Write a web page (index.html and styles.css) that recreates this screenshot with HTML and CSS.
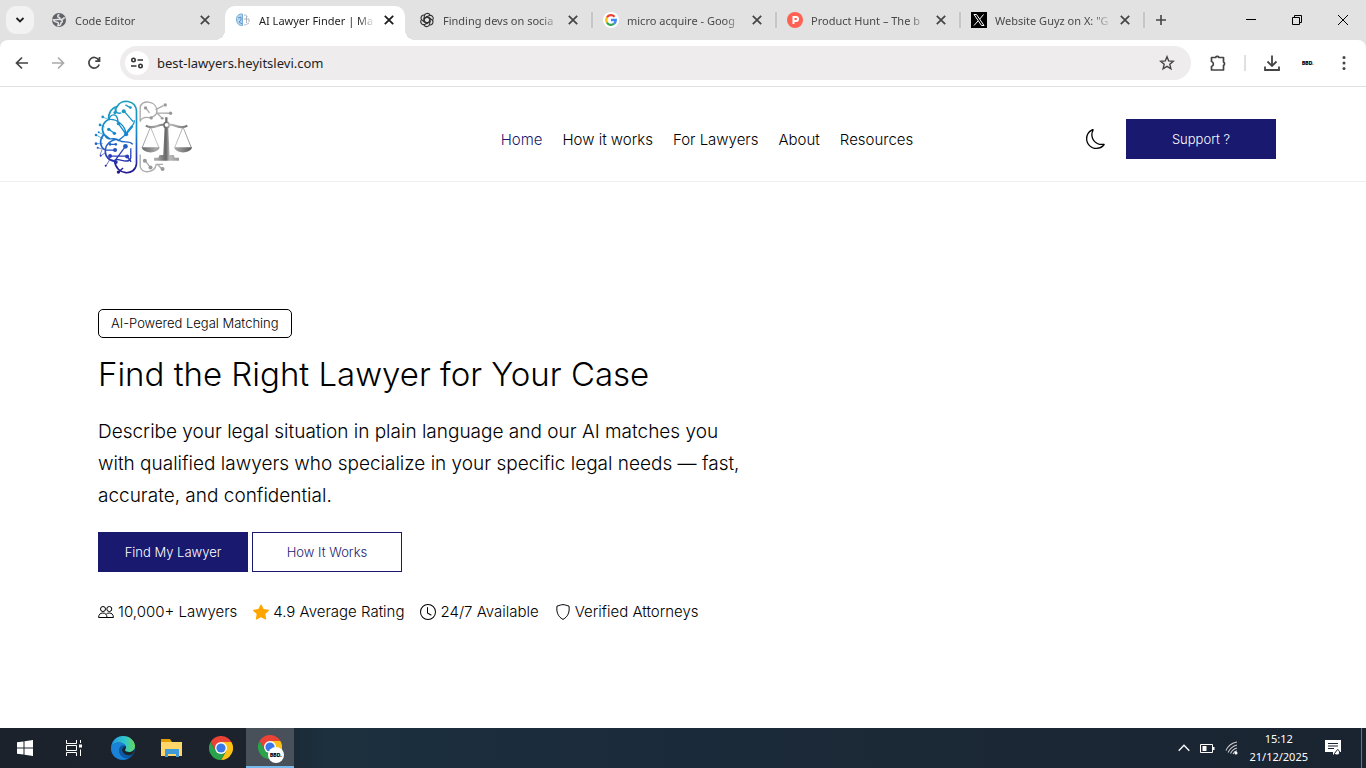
FILE: index.html
```
<!DOCTYPE html>
<html lang="en">
<head>
    <meta charset="UTF-8">
    <meta name="viewport" content="width=device-width, initial-scale=1.0">
    <title>AI Lawyer Finder</title>
    <link rel="stylesheet" href="styles.css">
</head>
<body>
    <!-- Shared symbols -->
    <svg class="defs" aria-hidden="true">
        <symbol id="close" viewBox="0 0 10 10"><path d="M1.5 1.5l7 7M8.5 1.5l-7 7" fill="none" stroke="currentColor" stroke-width="1.5"/></symbol>
        <symbol id="chrome" viewBox="0 0 24 24">
            <path d="M12 6h10.4A12 12 0 0 0 1.6 6l5.2 9z" fill="#ea4335"/>
            <path d="M17.2 15L12 24A12 12 0 0 0 22.4 6H12z" fill="#fbc116"/>
            <path d="M6.8 15L1.6 6A12 12 0 0 0 12 24l5.2-9z" fill="#2ba24c"/>
            <circle cx="12" cy="12" r="6" fill="#fff"/>
            <circle cx="12" cy="12" r="4.6" fill="#3b78e7"/>
        </symbol>
    </svg>

    <div class="tab-strip">
        <button class="tab-search" aria-label="Search tabs"><svg viewBox="0 0 10 10" width="10" height="10"><path d="M1.5 3L5 6.5 8.5 3" fill="none" stroke="#222" stroke-width="1.8"/></svg></button>
        <div class="tabs">
            <div class="tab no-line">
                <svg class="favicon" viewBox="0 0 16 16"><circle cx="8" cy="8" r="7" fill="#5f6368"/><path d="M8.5 2.5C6.500 3 6 5 8 5.500s.5 2-1.500 2L2.300 8c.7 1.500 2 2.300 4 2.200 1.500 0 1.200 1.800.7 3.300 2.500.3 3-1.500 3-2.700 2-.3 1.500-2.500 0-3 1.500-.8 3-.8 3.500-2.500" fill="none" stroke="#e2e2e2" stroke-width="1.6"/></svg>
                <span class="tab-title">Code Editor</span>
                <button class="tab-close" aria-label="Close"><svg><use href="#close"/></svg></button>
            </div>
            <div class="tab active no-line">
                <svg class="favicon" viewBox="0 0 16 16"><path d="M7.500 2C4 1.500 1 4 1.500 8s3 6 6 5.500z" fill="#b5d7ee" stroke="#79add4"/><path d="M3 6l3-1v3L4 10l3 2" fill="none" stroke="#5a8fd0"/><path d="M9 3c3 0 3 1 3 2M9 7h5M11.500 4v7M9 13c2 0 3-1 5-2M14 7v3" fill="none" stroke="#aeb4bb"/></svg>
                <span class="tab-title">AI Lawyer Finder | Ma</span>
                <button class="tab-close" aria-label="Close"><svg><use href="#close"/></svg></button>
            </div>
            <div class="tab">
                <svg class="favicon" viewBox="0 0 16 16"><g fill="none" stroke="#333" stroke-width="1.1"><path id="petal" d="M5.300 9.500V4.300a3 3 0 0 1 5.700-1.200M5.300 6.300L8 4.700l3.700 2.100"/><use href="#petal" transform="rotate(60 8 8)"/><use href="#petal" transform="rotate(120 8 8)"/><use href="#petal" transform="rotate(180 8 8)"/><use href="#petal" transform="rotate(240 8 8)"/><use href="#petal" transform="rotate(300 8 8)"/></g></svg>
                <span class="tab-title">Finding devs on socia</span>
                <button class="tab-close" aria-label="Close"><svg><use href="#close"/></svg></button>
            </div>
            <div class="tab">
                <svg class="favicon" viewBox="0 0 16 16"><circle cx="8" cy="8" r="8" fill="#fff"/><g fill="none" stroke-width="2.300"><path d="M3.900 5.500A4.800 4.800 0 0 1 11.600 4.800" stroke="#ea4335"/><path d="M3.900 5.500a5 5 0 0 0 0 5" stroke="#fbbc05"/><path d="M3.900 10.500a4.800 4.800 0 0 0 7.200 1.200" stroke="#34a853"/><path d="M11.100 11.700A4.800 4.800 0 0 0 12.800 8H8" stroke="#4285f4"/></g></svg>
                <span class="tab-title">micro acquire - Goog</span>
                <button class="tab-close" aria-label="Close"><svg><use href="#close"/></svg></button>
            </div>
            <div class="tab">
                <svg class="favicon" viewBox="0 0 16 16"><circle cx="8" cy="8" r="8" fill="#ff6154"/><path d="M6.500 12V5h2.600a1.900 1.900 0 0 1 0 3.900H6.500" fill="none" stroke="#fff" stroke-width="2"/></svg>
                <span class="tab-title">Product Hunt – The b</span>
                <button class="tab-close" aria-label="Close"><svg><use href="#close"/></svg></button>
            </div>
            <div class="tab">
                <svg class="favicon" viewBox="0 0 16 16"><path d="M0 0h16v16H0z"/><path d="M3 2.500h2.500l7.500 11h-2.500zM12.500 2.500L8.800 7M7 9l-4 4.500" fill="none" stroke="#fff" stroke-width="1"/></svg>
                <span class="tab-title">Website Guyz on X: "G</span>
                <button class="tab-close" aria-label="Close"><svg><use href="#close"/></svg></button>
            </div>
        </div>
        <button class="new-tab" aria-label="New tab"><svg viewBox="0 0 12 12" width="12" height="12"><path d="M6 1v10M1 6h10" stroke="#444" stroke-width="1.6"/></svg></button>
        <div class="window-buttons">
            <button aria-label="Minimize"><svg viewBox="0 0 12 12"><path d="M1 5.500h10" stroke="#000"/></svg></button>
            <button aria-label="Restore"><svg viewBox="0 0 12 12"><path d="M1.500 3.500h7v7h-7zM3.500 3.500v-2h7v7h-2" fill="none" stroke="#000"/></svg></button>
            <button aria-label="Close window"><svg viewBox="0 0 12 12"><path d="M1 1l10 10M11 1L1 11" stroke="#000"/></svg></button>
        </div>
    </div>

    <div class="toolbar">
        <button class="tool" aria-label="Back"><svg viewBox="0 0 16 16"><path d="M14 8H3M8 2.500L2.500 8 8 13.500" fill="none" stroke="#444" stroke-width="1.700"/></svg></button>
        <button class="tool" aria-label="Forward"><svg viewBox="0 0 16 16"><path d="M2 8h11M8 2.500L13.500 8 8 13.500" fill="none" stroke="#aaa" stroke-width="1.700"/></svg></button>
        <button class="tool" aria-label="Reload"><svg viewBox="0 0 16 16"><path d="M12.700 5A5.300 5.300 0 1 0 13.200 9.500M13.500 2v4.200H9.300" fill="none" stroke="#444" stroke-width="1.700"/></svg></button>
        <div class="address-bar">
            <button class="site-info" aria-label="Site information"><svg viewBox="0 0 14 14" width="14" height="14"><g fill="none" stroke="#333" stroke-width="1.600"><circle cx="3.500" cy="4" r="1.700"/><path d="M7.500 4H13M1 10h5.500"/><circle cx="10.500" cy="10" r="1.700"/></g></svg></button>
            <input class="url" type="text" aria-label="Address" value="best-lawyers.heyitslevi.com">
            <button class="bookmark" aria-label="Bookmark"><svg viewBox="0 0 16 16" width="16" height="16"><path d="M8 1.700l1.700 4.200 4.600.4-3.500 3 1.100 4.500L8 11.400l-3.900 2.400 1.100-4.500-3.500-3 4.600-.4z" fill="none" stroke="#444" stroke-width="1.400"/></svg></button>
        </div>
        <div class="actions">
            <button aria-label="Extensions"><svg viewBox="0 0 18 18" width="18" height="18"><path d="M2.500 3.500h4a2 2 0 0 1 3.500 0h4.500V8a2 2 0 0 1 0 3.500v4.500h-12V12.500a2.600 2.600 0 0 0 0-5z" fill="none" stroke="#444" stroke-width="1.700" stroke-linejoin="round"/></svg></button>
            <span class="divider"></span>
            <button aria-label="Downloads"><svg viewBox="0 0 18 18" width="18" height="18"><path d="M9 1.500v10M4.500 7.500L9 12l4.500-4.500M2 12.500V16h14v-3.500" fill="none" stroke="#444" stroke-width="1.800"/></svg></button>
            <button class="profile" aria-label="Profile">BBD<b>.</b></button>
            <button class="more" aria-label="Menu"><svg viewBox="0 0 4 16" width="4" height="16"><g fill="#444"><circle cx="2" cy="2.500" r="1.500"/><circle cx="2" cy="8" r="1.500"/><circle cx="2" cy="13.500" r="1.500"/></g></svg></button>
        </div>
    </div>

    <div class="page">
        <header class="site-header">
            <a class="logo" href="#" aria-label="AI Lawyer Finder">
                <svg viewBox="44 30 296 220">
                    <defs>
                        <linearGradient id="brain" gradientUnits="userSpaceOnUse" x1="0" y1="35" x2="0" y2="245"><stop offset="0" stop-color="#1d9fc0"/><stop offset=".45" stop-color="#1488cf"/><stop offset=".75" stop-color="#2a3fbd"/><stop offset="1" stop-color="#21188e"/></linearGradient>
                        <linearGradient id="steel" gradientUnits="userSpaceOnUse" x1="185" y1="0" x2="340" y2="0"><stop offset="0" stop-color="#666"/><stop offset=".3" stop-color="#aaa"/><stop offset=".48" stop-color="#666"/><stop offset=".55" stop-color="#bbb"/><stop offset=".8" stop-color="#888"/><stop offset="1" stop-color="#555"/></linearGradient>
                    </defs>
                    <g fill="none" stroke="url(#brain)" stroke-width="5">
                        <path d="M171 62C168 28 125 26 114 48 98 52 86 66 88 88 70 96 64 116 74 132 58 148 62 172 78 178 76 198 90 212 106 212 110 256 168 258 171 220z"/>
                        <path d="M114 48C104 60 110 72 126 68M88 88C94 70 110 70 114 84L117 100M88 88C110 84 138 104 140 132M140 132L117 100M74 132C88 158 104 136 118 150 134 160 148 148 160 162M74 132L92 146M140 132L118 150M78 178C80 156 110 140 118 152M106 212C106 196 148 226 154 202V174M164 90C168 106 150 106 140 132" stroke-width="4"/>
                        <path d="M133 62l28 32M140 132l20-24M106 50l3 18M138 44l14 8M88 117l17 12M92 162h18M80 179h26M92 197h52M138 168l-28 38M143 198l12 16M117 245l14-12" stroke-width="4"/>
                        <path d="M88 88l-18-8M76 110l-14-6M74 134l-16-8M72 146l-22-12M70 160H50M76 178l-22-6M80 186l-16 10M92 206l-12 20M68 178l-6 16" stroke-width="2"/>
                    </g>
                    <g fill="url(#brain)">
                        <circle cx="133" cy="63" r="6"/><circle cx="107" cy="67" r="5"/><circle cx="140" cy="132" r="6"/><circle cx="117" cy="100" r="5"/><circle cx="88" cy="117" r="5"/><circle cx="105" cy="129" r="5"/><circle cx="92" cy="162" r="4"/><circle cx="109" cy="162" r="4"/><circle cx="107" cy="179" r="6"/><circle cx="138" cy="168" r="7"/><circle cx="92" cy="197" r="6"/><circle cx="143" cy="198" r="6"/><circle cx="109" cy="215" r="6"/><circle cx="117" cy="245" r="5"/>
                        <circle cx="70" cy="80" r="4"/><circle cx="62" cy="104" r="4"/><circle cx="58" cy="126" r="3"/><circle cx="50" cy="134" r="4"/><circle cx="50" cy="160" r="4"/><circle cx="55" cy="172" r="3"/><circle cx="64" cy="196" r="3"/><circle cx="79" cy="226" r="3"/><circle cx="153" cy="52" r="4"/>
                    </g>
                    <g fill="none" stroke="#aaa" stroke-width="4">
                        <path d="M182 94V52c2-24 46-22 50 6 2 16-10 24-24 24M182 94c4-12 14-14 26-12M182 192v36c4 24 44 20 48-6h20M228 58l24-12M230 68l40 1M234 70l12 12M198 52l12 16M196 210l16 20M234 222l12 12"/>
                    </g>
                    <g fill="#999"><circle cx="198" cy="53" r="5"/><circle cx="215" cy="83" r="5"/><circle cx="257" cy="44" r="5"/><circle cx="273" cy="69" r="5"/><circle cx="248" cy="84" r="4"/><circle cx="196" cy="211" r="6"/><circle cx="213" cy="231" r="6"/><circle cx="249" cy="236" r="6"/></g>
                    <g fill="url(#steel)">
                        <path d="M257 81h7v15h-7zM255 112h11l4 82h-19zM240 194h42l4 8h12v9h-74v-9h12z"/>
                        <path d="M187 171h53c-3 20-50 20-53 0zM284 171h53c-3 20-50 20-53 0z"/>
                    </g>
                    <g fill="none" stroke="url(#steel)" stroke-width="3">
                        <circle cx="261" cy="104" r="8" stroke-width="5"/><path d="M253 104c-16-4-32 16-54 2M269 104c16-4 32 16 54 2" stroke-width="6"/>
                        <path d="M213 110l-25 62M213 110l25 62M310 110l-25 62M310 110l25 62" stroke-width="2"/>
                    </g>
                </svg>
            </a>
            <nav class="site-nav">
                <a class="current" href="#">Home</a>
                <a href="#">How it works</a>
                <a href="#">For Lawyers</a>
                <a href="#">About</a>
                <a href="#">Resources</a>
            </nav>
            <div class="header-actions">
                <button class="theme-toggle" aria-label="Toggle dark mode"><svg viewBox="0 0 16 16" width="20" height="20"><path d="M6 .278a.77.77 0 0 1 .08.858 7.200 7.200 0 0 0-.878 3.460c0 4.021 3.278 7.277 7.318 7.277q.792-.001 1.533-.16a.79.79 0 0 1 .81.316.73.73 0 0 1-.031.893A8.350 8.350 0 0 1 8.344 16C3.734 16 0 12.286 0 7.710 0 4.266 2.114 1.312 5.124.060A.75.75 0 0 1 6 .278M4.858 1.311A7.270 7.270 0 0 0 1.025 7.710c0 4.020 3.279 7.276 7.319 7.276a7.320 7.320 0 0 0 5.205-2.162q-.506.063-1.029.063c-4.610 0-8.343-3.714-8.343-8.290 0-1.167.242-2.278.681-3.286"/></svg></button>
                <button class="btn">Support ?</button>
            </div>
        </header>

        <main class="hero">
            <span class="badge">AI-Powered Legal Matching</span>
            <h1>Find the Right Lawyer for Your Case</h1>
            <p class="lead">Describe your legal situation in plain language and our AI matches you with qualified lawyers who specialize in your specific legal needs — fast, accurate, and confidential.</p>
            <div class="hero-buttons">
                <button class="btn">Find My Lawyer</button>
                <button class="btn btn-outline">How It Works</button>
            </div>
            <ul class="stats">
                <li><svg viewBox="0 0 16 16"><g fill="none" stroke="#000"><circle cx="5" cy="5" r="2.500"/><circle cx="11.300" cy="5" r="2.500"/><path d="M.6 13.500c0-3 1.700-4.500 4.200-4.500s4.200 1.500 4.200 4.500zM9 13.500h6.400c0-3-1.600-4.500-4.100-4.500-1.300 0-2.300.4-3 1.100"/></g></svg>10,000+ Lawyers</li>
                <li><svg viewBox="0 0 16 16"><path fill="#ffa500" d="M3.612 15.443c-.386.198-.824-.149-.746-.592l.83-4.730L.173 6.765c-.329-.314-.158-.888.283-.95l4.898-.696L7.538.792c.197-.39.73-.39.927 0l2.184 4.327 4.898.696c.441.062.612.636.282.95l-3.522 3.356.83 4.730c.078.443-.36.79-.746.592L8 13.187l-4.389 2.256z"/></svg>4.9 Average Rating</li>
                <li><svg viewBox="0 0 16 16"><path d="M8 3.500a.5.5 0 0 0-1 0V9a.5.5 0 0 0 .252.434l3.500 2a.5.5 0 0 0 .496-.868L8 8.710z"/><path d="M8 16A8 8 0 1 0 8 0a8 8 0 0 0 0 16m7-8A7 7 0 1 1 1 8a7 7 0 0 1 14 0"/></svg>24/7 Available</li>
                <li><svg viewBox="0 0 16 16"><path d="M8 .6c-1.300 0-3.500.8-6 1.500C1.300 7.500 2.500 12.500 8 15.400 13.500 12.500 14.700 7.500 14 2.100 11.500 1.400 9.300.6 8 .6z" fill="none" stroke="#000"/></svg>Verified Attorneys</li>
            </ul>
        </main>
    </div>

    <footer class="taskbar">
        <button class="task" aria-label="Start"><svg viewBox="0 0 16 16" width="16" height="16"><path d="M0 2.300l6.500-.9v6.100H0zM7.500 1.200L16 0v7.500H7.500zM0 8.500h6.500v6.100L0 13.700zM7.500 8.500H16V16l-8.500-1.200z" fill="#fff"/></svg></button>
        <button class="task" aria-label="Task view"><svg viewBox="0 0 16 16" width="16" height="16"><path d="M.5 0v3.500h10V0M.5 16v-3.500h10V16M.5 5.500h10v5H.5zM14.500 0v3M14.500 9.500V16" fill="none" stroke="#fff"/><path d="M13 4.500h3v3h-3z" fill="#fff"/></svg></button>
        <button class="task" aria-label="Edge"><svg viewBox="0 0 24 24" width="24" height="24"><defs><linearGradient id="edge" x1="0" y1="0" x2="1" y2="0"><stop offset="0" stop-color="#239ce0"/><stop offset=".6" stop-color="#31c8c9"/><stop offset="1" stop-color="#67d957"/></linearGradient></defs><circle cx="12" cy="12" r="12" fill="#0c59a4"/><path d="M0 12C1 4 6 0 12 0c7 0 12 5 12 10 0 4-3 6-6 6-3 0-4-1-4-2s1-1 1-3-3-4.500-7-4.500S1 8 0 12z" fill="url(#edge)"/><path d="M0 12c.5-3 4-6 8-5.500S14 9 15 10c-4-2-7 1-7 4 0 5 4 9 9 8.500C10 26 0 22 0 12z" fill="#1b83d7"/><path d="M15 10c0 2-1 3-1 4s1 2 4 2c2 0 4-.5 5.500-3-.4 2-1.500 5-3 6.500-4 1.500-9-1-9.500-5 0-2 2-4 4-4.500z" fill="#1c232b"/><path d="M8 14c0 5 4 8 8 8 2 0 5-2 6-4-5 3-11 0-11-5" fill="#0c59a4"/></svg></button>
        <button class="task" aria-label="File Explorer"><svg viewBox="0 0 24 24" width="24" height="24"><path d="M1 3h9l2 3v6H1z" fill="#e2a000"/><path d="M1 6h21v14H1z" fill="#ffd667"/><path d="M5 13h14v8h-3v-3H8v3H5z" fill="#3e9ad8"/></svg></button>
        <button class="task" aria-label="Chrome"><svg width="24" height="24"><use href="#chrome"/></svg></button>
        <button class="task task-active" aria-label="Chrome profile"><svg width="24" height="24"><use href="#chrome"/></svg><span class="profile-badge">BBD.</span></button>
        <div class="tray">
            <svg viewBox="0 0 12 8" width="12" height="8"><path d="M.7 6.700L6 1.300l5.300 5.400" fill="none" stroke="#fff" stroke-width="1.300"/></svg>
            <svg viewBox="0 0 15 10" width="15" height="10"><path d="M.5 1.500h12v8H.5z" fill="none" stroke="#fff"/><path d="M2.500 3h4v5h-4zM13 4h1.500v3H13z" fill="#fff"/></svg>
            <svg viewBox="0 0 14 14" width="14" height="14"><g fill="none" stroke="#ccc" stroke-width="1.100"><path d="M1 9.500C3 5 7 1.800 12 1M3 11.500C5 7.500 8 5 12 4M5.500 12.500C7 9.500 9 7.800 12 7M8 13c1-2 2-3 4-3.300"/></g><circle cx="11" cy="12" r="1.500" fill="#fff"/></svg>
            <time class="clock"><span>15:12</span><span>21/12/2025</span></time>
            <svg class="notice" viewBox="0 0 18 16" width="18" height="16"><path d="M1 0h16v12h-5l-3 3v-3H1z" fill="#fff"/><path d="M4 3.500h10M4 6h10M4 8.500h6" stroke="#1b2533"/><path d="M10.500 13.500l3-4a3 3 0 0 1 2 2.500 2.500 2.500 0 0 1-4 2.500z" fill="#fff" stroke="#1b2533"/></svg>
        </div>
    </footer>
</body>
</html>
```
FILE: styles.css
```
* {
    box-sizing: border-box;
}
body {
    margin: 0;
    height: 100vh;
    display: flex;
    flex-direction: column;
    overflow: hidden;
    background: #e2e2e2;
    color: #000;
    font-family: Inter, sans-serif;
    font-weight: 300;
}
button {
    border: none;
    background: none;
    padding: 0;
    font: inherit;
    color: inherit;
    cursor: pointer;
}
svg {
    display: block;
}
.defs {
    position: absolute;
    width: 0;
    height: 0;
}

/* Browser tabs */
.tab-strip {
    display: flex;
    align-items: center;
    height: 40px;
    padding-left: 6px;
    font-family: "Noto Sans", sans-serif;
    font-size: 11px;
    font-weight: 400;
    color: #484848;
}
.tab-search {
    width: 28px;
    height: 28px;
    margin-right: 7px;
    border-radius: 10px;
    background: #f2f2f2;
    display: flex;
    align-items: center;
    justify-content: center;
}
.tabs {
    display: flex;
    align-self: stretch;
    flex: 0 1 1104px;
    min-width: 0;
}
.tab {
    position: relative;
    flex: 1 1 0;
    min-width: 0;
    height: 40px;
    display: flex;
    align-items: center;
    gap: 8px;
    padding: 0 14px 0 10px;
}
.tab::after {
    content: "";
    position: absolute;
    right: 0;
    top: 12px;
    width: 2px;
    height: 16px;
    background: #c6c6c6;
}
.no-line::after {
    display: none;
}
.favicon {
    flex: none;
    width: 16px;
    height: 16px;
}
.tab-title {
    flex: 1;
    min-width: 0;
    overflow: hidden;
    white-space: nowrap;
    -webkit-mask-image: linear-gradient(90deg, #000 85%, transparent);
    mask-image: linear-gradient(90deg, #000 85%, transparent);
}
.tab-close {
    width: 12px;
    height: 12px;
}
.tab-close svg {
    width: 12px;
    height: 12px;
}
.active {
    height: 34px;
    align-self: flex-end;
    border-radius: 10px 10px 0 0;
    background: #fff;
    color: #1f1f1f;
    margin-right: 4px;
    padding-right: 10px;
    padding-bottom: 6px;
}
.active::before, .active.no-line::after {
    content: "";
    display: block;
    position: absolute;
    top: auto;
    bottom: 0;
    width: 10px;
    height: 10px;
}
.active::before {
    left: -10px;
    background: radial-gradient(circle at 0 0, #e2e2e2 10px, #fff 10px);
}
.active.no-line::after {
    right: -10px;
    background: radial-gradient(circle at 100% 0, #e2e2e2 10px, #fff 10px);
}
.new-tab {
    padding: 8px 10px;
}
.window-buttons {
    display: flex;
    margin-left: auto;
}
.window-buttons button {
    width: 46px;
    height: 40px;
    display: flex;
    align-items: center;
    justify-content: center;
}
.window-buttons svg {
    width: 12px;
    height: 12px;
}

/* Address toolbar */
.toolbar {
    display: flex;
    align-items: center;
    height: 46px;
    padding: 0 20px 0 4px;
    border-radius: 8px 8px 0 0;
    background: #fff;
    font-family: "Noto Sans", sans-serif;
    font-weight: 400;
}
.tool {
    width: 36px;
    height: 36px;
    display: flex;
    align-items: center;
    justify-content: center;
}
.tool svg {
    width: 16px;
    height: 16px;
}
.address-bar {
    flex: 1;
    display: flex;
    align-items: center;
    height: 34px;
    margin-left: 8px;
    padding: 0 16px 0 5px;
    border-radius: 17px;
    background: #eeeced;
}
.site-info {
    width: 24px;
    height: 24px;
    border-radius: 50%;
    background: #fff;
    display: flex;
    align-items: center;
    justify-content: center;
}
.url {
    flex: 1;
    min-width: 0;
    margin-left: 8px;
    padding: 0;
    border: none;
    outline: none;
    background: none;
    font: inherit;
    font-size: 13px;
    color: #1f1f1f;
}
.actions {
    display: flex;
    align-items: center;
    gap: 17px;
    margin-left: 18px;
}
.divider {
    width: 2px;
    height: 16px;
    background: #e0e0e0;
}
.profile {
    width: 16px;
    margin-left: 2px;
    font-family: Inter, sans-serif;
    font-size: 5px;
    font-weight: 900;
    color: #000;
}
.profile b {
    color: #e0203a;
}
.more {
    margin-left: 9px;
}

/* Website */
.page {
    flex: 1;
    min-height: 0;
    overflow: hidden;
    border-top: 1px solid #e0e0e0;
    background: #fff;
}
.site-header {
    display: flex;
    align-items: center;
    justify-content: space-between;
    height: 95px;
    padding: 0 90px 0 94px;
    border-bottom: 1px solid #eee;
}
.site-header a {
    color: #000;
    text-decoration: none;
}
.logo {
    flex: 0 1 234px;
    padding-top: 6px;
}
.logo svg {
    width: 99px;
    height: 74px;
}
.site-nav {
    display: flex;
    gap: 20px;
    padding-top: 10px;
    font-size: 15px;
}
.site-header .current {
    color: #191970;
}
.header-actions {
    display: flex;
    align-items: center;
    gap: 20px;
    padding-top: 10px;
}
.btn {
    width: 150px;
    height: 40px;
    border: 1px solid #191970;
    background: #191970;
    color: #fff;
    font-size: 13px;
}
.btn-outline {
    background: #fff;
    color: #191970;
}
.hero {
    padding: 127px 98px 0;
}
.badge {
    display: inline-block;
    padding: 5px 12px;
    border: 1px solid #000;
    border-radius: 5px;
    font-size: 13px;
    line-height: 17px;
}
.hero h1 {
    margin: 14px 0 20px;
    font-size: 33px;
    font-weight: 300;
    line-height: 44px;
}
.lead {
    max-width: 650px;
    margin: 0 0 20px;
    font-size: 19px;
    line-height: 32px;
}
.hero-buttons {
    display: flex;
    gap: 4px;
}
.stats {
    display: flex;
    flex-wrap: wrap;
    gap: 16px;
    margin: 30px 0 0;
    padding: 0;
    list-style: none;
    font-size: 15px;
    line-height: 20px;
}
.stats li {
    display: flex;
    align-items: center;
    gap: 4px;
}
.stats svg {
    width: 16px;
    height: 16px;
}

/* Windows taskbar */
.taskbar {
    display: flex;
    height: 40px;
    padding-left: 1px;
    background: linear-gradient(90deg, #1c222b 0%, #1c232c 18%, #1c303e 24%, #1b2b3b 45%, #1b2836 70%, #1a2431 100%);
    color: #fff;
    font-family: "Noto Sans", sans-serif;
    font-size: 11px;
    font-weight: 400;
}
.task {
    position: relative;
    width: 48px;
    height: 40px;
    margin-right: 1px;
    display: flex;
    align-items: center;
    justify-content: center;
}
.task-active {
    background: #48505a;
    border-bottom: 2px solid #76b9ed;
}
.profile-badge {
    position: absolute;
    right: 10px;
    bottom: 3px;
    width: 16px;
    height: 16px;
    border-radius: 50%;
    background: #fff;
    color: #000;
    font-family: Inter, sans-serif;
    font-size: 5px;
    font-weight: 900;
    line-height: 16px;
}
.tray {
    display: flex;
    align-items: center;
    gap: 10px;
    margin-left: auto;
    margin-right: 4px;
    padding-right: 19px;
    border-right: 1px solid #6b7480;
}
.clock {
    display: flex;
    flex-direction: column;
    align-items: center;
    line-height: 18px;
}
.notice {
    margin-left: 6px;
}
```
